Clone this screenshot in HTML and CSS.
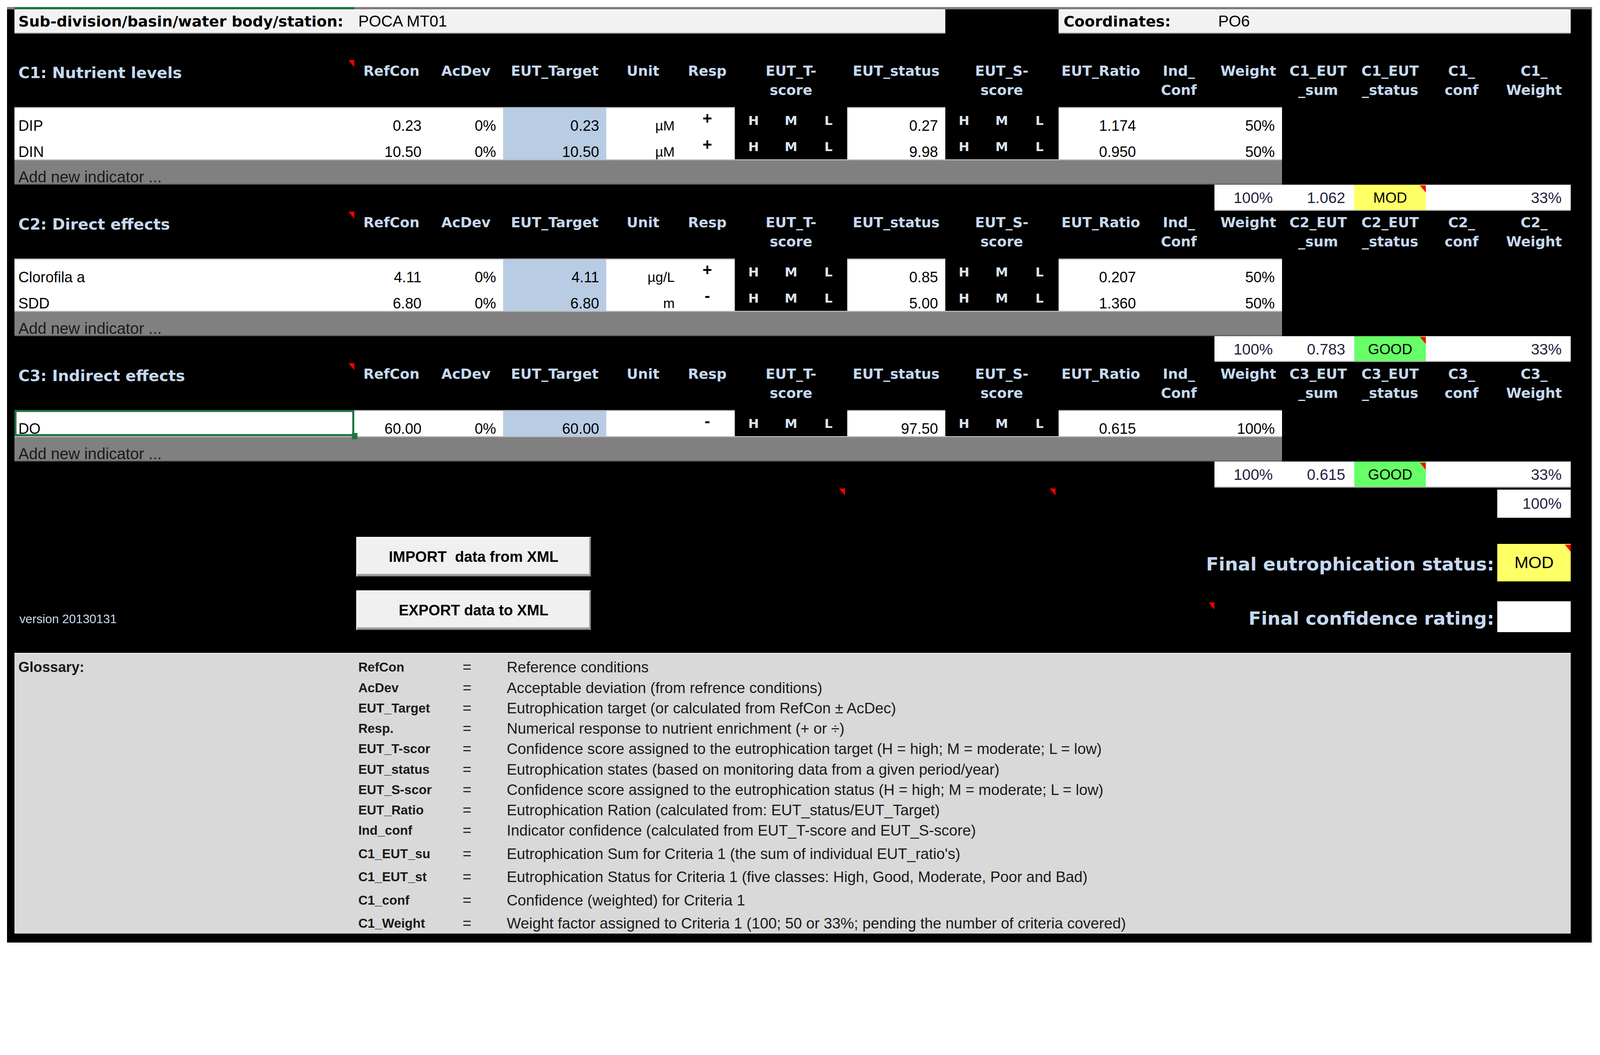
FILE: index.html
```html
<!DOCTYPE html>
<html>
<head>
  <meta charset="utf-8">
  <link rel="stylesheet" href="styles.css">
</head>
<body>
  <div class="sheet">
    <div class="colbar"><span class="colbar-sel"></span></div>

    <div class="grid topbar">
      <div class="tb tb-label">Sub-division/basin/water body/station:</div>
      <div class="tb tb-station-val">POCA MT01</div>
      <div class="tb tb-label tb-coord-label">Coordinates:</div>
      <div class="tb tb-coord-val">PO6</div>
    </div>

    <div class="spacer"></div>

    <!-- C1 -->
    <section class="crit">
      <div class="grid head">
        <div class="h-title note">C1: Nutrient levels</div>
        <div>RefCon</div>
        <div>AcDev</div>
        <div>EUT_Target</div>
        <div>Unit</div>
        <div>Resp</div>
        <div>EUT_T-<br>score</div>
        <div>EUT_status</div>
        <div>EUT_S-<br>score</div>
        <div>EUT_Ratio</div>
        <div>Ind_<br>Conf</div>
        <div>Weight</div>
        <div>C1_EUT<br>_sum</div>
        <div>C1_EUT<br>_status</div>
        <div>C1_<br>conf</div>
        <div>C1_<br>Weight</div>
      </div>
      <div class="grid data first">
        <div class="c name">DIP</div>
        <div class="c">0.23</div>
        <div class="c">0%</div>
        <div class="c target">0.23</div>
        <div class="c unit">µM</div>
        <div class="c resp">+</div>
        <div class="hml"><span>H</span><span>M</span><span>L</span></div>
        <div class="c">0.27</div>
        <div class="hml"><span>H</span><span>M</span><span>L</span></div>
        <div class="c">1.174</div>
        <div class="c"></div>
        <div class="c">50%</div>
      </div>
      <div class="grid data">
        <div class="c name">DIN</div>
        <div class="c">10.50</div>
        <div class="c">0%</div>
        <div class="c target">10.50</div>
        <div class="c unit">µM</div>
        <div class="c resp">+</div>
        <div class="hml"><span>H</span><span>M</span><span>L</span></div>
        <div class="c">9.98</div>
        <div class="hml"><span>H</span><span>M</span><span>L</span></div>
        <div class="c">0.950</div>
        <div class="c"></div>
        <div class="c">50%</div>
      </div>
      <div class="grid add"><div class="add-cell">Add new indicator ...</div></div>
      <div class="grid summary">
        <div class="s">100%</div>
        <div class="s">1.062</div>
        <div class="s status mod note">MOD</div>
        <div class="s"></div>
        <div class="s">33%</div>
      </div>
    </section>

    <!-- C2 -->
    <section class="crit">
      <div class="grid head">
        <div class="h-title note">C2: Direct effects</div>
        <div>RefCon</div>
        <div>AcDev</div>
        <div>EUT_Target</div>
        <div>Unit</div>
        <div>Resp</div>
        <div>EUT_T-<br>score</div>
        <div>EUT_status</div>
        <div>EUT_S-<br>score</div>
        <div>EUT_Ratio</div>
        <div>Ind_<br>Conf</div>
        <div>Weight</div>
        <div>C2_EUT<br>_sum</div>
        <div>C2_EUT<br>_status</div>
        <div>C2_<br>conf</div>
        <div>C2_<br>Weight</div>
      </div>
      <div class="grid data first">
        <div class="c name">Clorofila a</div>
        <div class="c">4.11</div>
        <div class="c">0%</div>
        <div class="c target">4.11</div>
        <div class="c unit">µg/L</div>
        <div class="c resp">+</div>
        <div class="hml"><span>H</span><span>M</span><span>L</span></div>
        <div class="c">0.85</div>
        <div class="hml"><span>H</span><span>M</span><span>L</span></div>
        <div class="c">0.207</div>
        <div class="c"></div>
        <div class="c">50%</div>
      </div>
      <div class="grid data">
        <div class="c name">SDD</div>
        <div class="c">6.80</div>
        <div class="c">0%</div>
        <div class="c target">6.80</div>
        <div class="c unit">m</div>
        <div class="c resp">-</div>
        <div class="hml"><span>H</span><span>M</span><span>L</span></div>
        <div class="c">5.00</div>
        <div class="hml"><span>H</span><span>M</span><span>L</span></div>
        <div class="c">1.360</div>
        <div class="c"></div>
        <div class="c">50%</div>
      </div>
      <div class="grid add"><div class="add-cell">Add new indicator ...</div></div>
      <div class="grid summary">
        <div class="s">100%</div>
        <div class="s">0.783</div>
        <div class="s status good note">GOOD</div>
        <div class="s"></div>
        <div class="s">33%</div>
      </div>
    </section>

    <!-- C3 -->
    <section class="crit">
      <div class="grid head">
        <div class="h-title note">C3: Indirect effects</div>
        <div>RefCon</div>
        <div>AcDev</div>
        <div>EUT_Target</div>
        <div>Unit</div>
        <div>Resp</div>
        <div>EUT_T-<br>score</div>
        <div>EUT_status</div>
        <div>EUT_S-<br>score</div>
        <div>EUT_Ratio</div>
        <div>Ind_<br>Conf</div>
        <div>Weight</div>
        <div>C3_EUT<br>_sum</div>
        <div>C3_EUT<br>_status</div>
        <div>C3_<br>conf</div>
        <div>C3_<br>Weight</div>
      </div>
      <div class="grid data first">
        <div class="c name selected">DO</div>
        <div class="c">60.00</div>
        <div class="c">0%</div>
        <div class="c target">60.00</div>
        <div class="c unit"></div>
        <div class="c resp">-</div>
        <div class="hml"><span>H</span><span>M</span><span>L</span></div>
        <div class="c">97.50</div>
        <div class="hml"><span>H</span><span>M</span><span>L</span></div>
        <div class="c">0.615</div>
        <div class="c"></div>
        <div class="c">100%</div>
      </div>
      <div class="grid add"><div class="add-cell">Add new indicator ...</div></div>
      <div class="grid summary">
        <div class="s">100%</div>
        <div class="s">0.615</div>
        <div class="s status good note">GOOD</div>
        <div class="s"></div>
        <div class="s">33%</div>
      </div>
    </section>

    <div class="grid total">
      <span class="tri tri-t"></span>
      <span class="tri tri-s"></span>
      <div class="total-cell">100%</div>
    </div>

    <div class="grid footer">
      <div class="version">version 20130131</div>
      <div class="buttons">
        <button class="btn">IMPORT&nbsp; data from XML</button>
        <button class="btn">EXPORT data to XML</button>
      </div>
      <div class="finals">
        <div class="final-label">Final eutrophication status:</div>
        <div class="final-cell final-mod note">MOD</div>
        <div class="final-label final-label-2">Final confidence rating:</div>
        <div class="final-cell final-blank"></div>
        <span class="tri final-mark"></span>
      </div>
    </div>

    <div class="glossary">
      <div class="gl-title">Glossary:</div>
      <div class="gl-list">
        <div class="gl-row"><span class="gl-term">RefCon</span><span class="gl-eq">=</span><span class="gl-desc">Reference conditions</span></div>
        <div class="gl-row"><span class="gl-term">AcDev</span><span class="gl-eq">=</span><span class="gl-desc">Acceptable deviation (from refrence conditions)</span></div>
        <div class="gl-row"><span class="gl-term">EUT_Target</span><span class="gl-eq">=</span><span class="gl-desc">Eutrophication target (or calculated from RefCon ± AcDec)</span></div>
        <div class="gl-row"><span class="gl-term">Resp.</span><span class="gl-eq">=</span><span class="gl-desc">Numerical response to nutrient enrichment (+ or ÷)</span></div>
        <div class="gl-row"><span class="gl-term">EUT_T-scor</span><span class="gl-eq">=</span><span class="gl-desc">Confidence score assigned to the eutrophication target (H = high; M = moderate; L = low)</span></div>
        <div class="gl-row"><span class="gl-term">EUT_status</span><span class="gl-eq">=</span><span class="gl-desc">Eutrophication states (based on monitoring data from a given period/year)</span></div>
        <div class="gl-row"><span class="gl-term">EUT_S-scor</span><span class="gl-eq">=</span><span class="gl-desc">Confidence score assigned to the eutrophication status (H = high; M = moderate; L = low)</span></div>
        <div class="gl-row"><span class="gl-term">EUT_Ratio</span><span class="gl-eq">=</span><span class="gl-desc">Eutrophication Ration (calculated from: EUT_status/EUT_Target)</span></div>
        <div class="gl-row"><span class="gl-term">Ind_conf</span><span class="gl-eq">=</span><span class="gl-desc">Indicator confidence (calculated from EUT_T-score and EUT_S-score)</span></div>
        <div class="gl-row tall"><span class="gl-term">C1_EUT_su</span><span class="gl-eq">=</span><span class="gl-desc">Eutrophication Sum for Criteria 1 (the sum of individual EUT_ratio's)</span></div>
        <div class="gl-row tall"><span class="gl-term">C1_EUT_st</span><span class="gl-eq">=</span><span class="gl-desc">Eutrophication Status for Criteria 1 (five classes: High, Good, Moderate, Poor and Bad)</span></div>
        <div class="gl-row tall"><span class="gl-term">C1_conf</span><span class="gl-eq">=</span><span class="gl-desc">Confidence (weighted) for Criteria 1</span></div>
        <div class="gl-row tall"><span class="gl-term">C1_Weight</span><span class="gl-eq">=</span><span class="gl-desc">Weight factor assigned to Criteria 1 (100; 50 or 33%; pending the number of criteria covered)</span></div>
      </div>
    </div>
  </div>
</body>
</html>
```

FILE: styles.css
```css
html {
  zoom: 2.613;
}

body {
  margin: 0;
  padding: 7px 0 0 7px;
  background: #fff;
  font-family: "Liberation Sans", Arial, sans-serif;
  color: #000;
}

.sheet {
  width: 1525px;
  padding: 0 20px 9px 7px;
  background: #000;
  border-right: 1px solid #8c8c8c;
}

.colbar {
  display: flex;
  height: 2px;
  margin: 0 -21px 0 -7px;
  background: #7f7f7f;
}

.colbar-sel {
  width: 333px;
  margin-left: 7px;
  background: #217346;
}

.grid {
  display: grid;
  grid-template-columns: 333px 73px 73px 101px 72px 54px 110px 96px 111px 83px 70px 66px 71px 70px 70px 72px;
}

/* top info bar */
.topbar {
  height: 24px;
}

.tb {
  display: flex;
  align-items: center;
  background: #f2f2f2;
  box-shadow: inset 0 -1px 0 #a6a6a6, inset 0 1px 0 #fff;
  font-size: 15.5px;
  white-space: nowrap;
}

.tb-label {
  padding-left: 4px;
  font-family: "DejaVu Sans", sans-serif;
  font-weight: bold;
  font-size: 14.6px;
}

.tb-station-val {
  grid-column: 2 / 9;
  padding-left: 4px;
}

.tb-coord-label {
  grid-column: 10 / 12;
  padding-left: 5px;
}

.tb-coord-val {
  grid-column: 12 / 17;
  padding-left: 3.5px;
}

.spacer {
  height: 25px;
}

/* criteria headers */
.head {
  height: 47px;
  font-family: "DejaVu Sans", sans-serif;
  font-weight: bold;
  font-size: 13.7px;
  line-height: 19px;
  color: #c6d9f0;
  text-align: center;
}

.head > div {
  padding-top: 2px;
  white-space: nowrap;
}

.head .h-title {
  padding: 4px 0 0 4px;
  text-align: left;
  font-size: 15.2px;
}

.note {
  position: relative;
}

.note::after {
  content: "";
  position: absolute;
  top: 1px;
  right: 0;
  border-top: 7px solid #f00;
  border-left: 6px solid transparent;
}

.tri {
  width: 0;
  height: 0;
  border-top: 7px solid #f00;
  border-left: 6px solid transparent;
}

/* data rows */
.data {
  height: 25.5px;
}

.c,
.s {
  display: flex;
  align-items: flex-end;
  justify-content: flex-end;
  padding-right: 7px;
  background: #fff;
  font-size: 14.5px;
  line-height: 14px;
  white-space: nowrap;
}

.first .c {
  box-shadow: inset 0 1px 0 #a6a6a6;
}

.c.name {
  justify-content: flex-start;
  padding: 0 0 0 4px;
}

.c.target {
  background: #b8cce4;
}

.c.unit {
  padding-right: 5px;
  font-size: 13.5px;
}

.c.resp {
  align-items: center;
  justify-content: center;
  padding: 0 0 3px;
  font-weight: bold;
  font-size: 16px;
}

.first .c.name.selected {
  position: relative;
  box-shadow: inset 0 0 0 2px #217346;
}

.selected::after {
  content: "";
  position: absolute;
  right: -3px;
  bottom: -3px;
  width: 5px;
  height: 6px;
  background: #217346;
}

.hml {
  display: grid;
  grid-template-columns: repeat(3, 1fr);
  align-items: center;
  padding-top: 1px;
  text-align: center;
  font-family: "DejaVu Sans", sans-serif;
  font-weight: bold;
  font-size: 12.5px;
  color: #dbe5f1;
}

.add {
  height: 25px;
}

.add-cell {
  grid-column: 1 / 13;
  display: flex;
  align-items: flex-end;
  padding-left: 4px;
  background: #808080;
  box-shadow: inset 0 -1px 0 #595959, inset 0 1px 0 #bfbfbf;
  font-size: 15.5px;
  line-height: 15px;
  color: #1a1a1a;
}

/* criteria summary */
.summary {
  height: 25.5px;
}

.summary .s {
  align-items: center;
  padding-right: 9px;
  font-size: 15px;
  line-height: 18px;
  color: #1f1f3f;
  box-shadow: inset 0 -1px 0 #a6a6a6;
}

.summary .s:first-child {
  grid-column-start: 12;
}

.summary .status {
  justify-content: center;
  padding-right: 0;
  font-size: 14.2px;
  color: #000;
}

.mod {
  background: #ffff66;
}

.good {
  background: #66ff66;
}

/* totals */
.total {
  height: 30px;
  align-items: start;
}

.tri-t {
  grid-column: 7;
  justify-self: end;
  margin: 1px 2px 0 0;
}

.tri-s {
  grid-column: 9;
  justify-self: end;
  margin: 1px 3px 0 0;
}

.total-cell {
  grid-column: 16;
  height: 27.5px;
  margin-top: 2px;
  display: flex;
  align-items: center;
  justify-content: flex-end;
  padding: 0 9px 0 0;
  box-sizing: border-box;
  background: #fff;
  font-size: 15px;
  line-height: 18px;
  color: #1f1f3f;
}

/* footer */
.footer {
  height: 132px;
}

.version {
  grid-column: 1;
  align-self: end;
  padding: 0 0 26px 5px;
  font-size: 12px;
  line-height: 14px;
  color: #c6d9f0;
}

.buttons {
  grid-column: 2 / 5;
  display: flex;
  flex-direction: column;
  gap: 13.7px;
  padding: 18.4px 0 0 2px;
}

.btn {
  width: 230px;
  height: 38.8px;
  padding: 0;
  box-sizing: border-box;
  border: 1px solid;
  border-color: #fff #6d6d6d #4a4a4a #fff;
  background: #f0f0f0;
  box-shadow: inset -1px -2px 0 #a0a0a0;
  font-family: "Liberation Sans", Arial, sans-serif;
  font-weight: bold;
  font-size: 14.6px;
  color: #000;
  cursor: pointer;
}

.finals {
  grid-column: 10 / 17;
  display: grid;
  grid-template-columns: 83px 70px 66px 71px 70px 70px 72px;
  grid-template-rows: 37px 30px;
  row-gap: 19.6px;
  padding-top: 25px;
}

.final-label {
  grid-column: 1 / 7;
  grid-row: 1;
  display: flex;
  align-items: center;
  justify-content: flex-end;
  padding: 3px 3px 0 0;
  font-family: "DejaVu Sans", sans-serif;
  font-weight: bold;
  font-size: 18px;
  color: #c6d9f0;
  white-space: nowrap;
}

.final-label-2 {
  grid-row: 2;
}

.final-cell {
  grid-column: 7;
  display: flex;
  align-items: center;
  justify-content: center;
  font-size: 16.5px;
}

.final-mod {
  grid-row: 1;
  background: #ffff66;
}

.final-blank {
  grid-row: 2;
  background: #fff;
}

.final-mark {
  grid-column: 2;
  grid-row: 2;
  justify-self: end;
  margin-top: 1px;
}

/* glossary */
.glossary {
  display: flex;
  height: 275px;
  box-sizing: border-box;
  padding-top: 4.3px;
  overflow: hidden;
  background: #d9d9d9;
  box-shadow: inset 0 1px 0 #efefef;
  color: #1a1a1a;
}

.gl-title {
  width: 333px;
  padding-left: 4px;
  box-sizing: border-box;
  font-weight: bold;
  font-size: 14px;
  line-height: 20px;
}

.gl-list {
  flex: 1;
}

.gl-row {
  display: grid;
  grid-template-columns: 74px 73px 1fr;
  height: 20px;
  font-size: 14.8px;
  line-height: 20px;
}

.gl-row.tall {
  height: 22.75px;
  align-items: end;
}

.gl-term {
  padding-left: 4px;
  white-space: nowrap;
  font-weight: bold;
  font-size: 12.7px;
}

.gl-eq {
  text-align: center;
}

.gl-desc {
  padding-left: 2.5px;
  white-space: nowrap;
}
```
